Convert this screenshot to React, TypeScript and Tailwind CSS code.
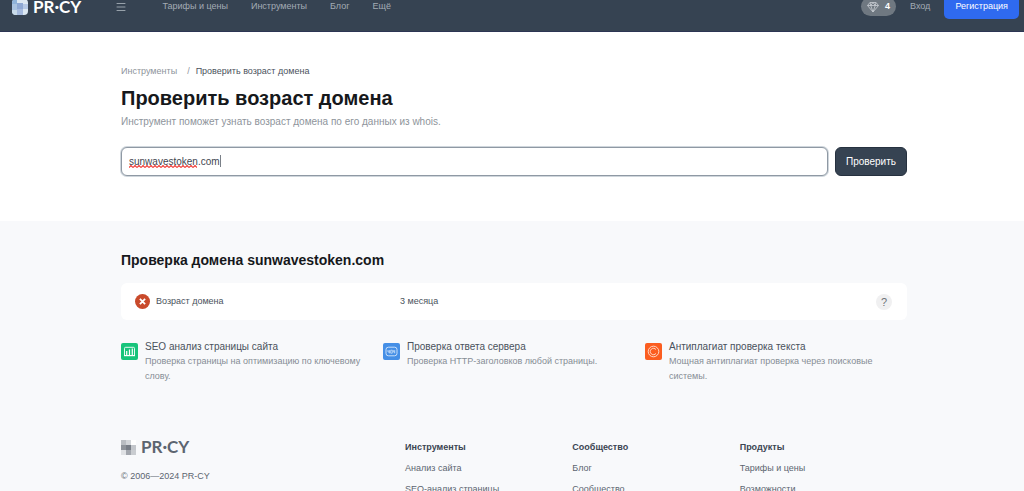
import type { ReactNode } from 'react';
import { Menu } from 'lucide-react';

const navLinks = ['Тарифы и цены', 'Инструменты', 'Блог', 'Ещё'];

const footerColumns = [
  { title: 'Инструменты', links: ['Анализ сайта', 'SEO-анализ страницы'] },
  { title: 'Сообщество', links: ['Блог', 'Сообщество'] },
  { title: 'Продукты', links: ['Тарифы и цены', 'Возможности'] },
];

function ChartIcon() {
  return (
    <svg viewBox="0 0 17 17" className="size-[17px]" fill="none" stroke="white">
      <path d="M3.5 13V5.4q0-1.1 1.1-1.1h7.8q1.1 0 1.1 1.1V13" strokeWidth="0.9" />
      <path d="M5.7 12.5V8M8.5 12.5V6.5M11.3 12.5V5.5" strokeWidth="1.2" />
      <path d="M3 12.6h11" strokeWidth="1.2" />
    </svg>
  );
}

function ServerIcon() {
  return (
    <svg viewBox="0 0 17 17" className="size-[17px]" fill="none" stroke="#d6e8fc" strokeWidth="0.9">
      <rect x="3" y="4.2" width="11" height="8.6" rx="2.4" />
      <path d="M5 7v2h1.8M6.4 7v3.4M7.7 7.2h1.6v3H7.7zM10.3 7v2h1.8M11.7 7v3.4" strokeWidth="0.7" />
    </svg>
  );
}

function CopyrightIcon() {
  return (
    <svg viewBox="0 0 17 17" className="size-[17px]" fill="none" stroke="#ffe3d6" strokeWidth="0.9">
      <circle cx="8.5" cy="8.5" r="5.3" />
      <path d="M11 6.6a3.2 3.2 0 1 0 0 3.8" />
    </svg>
  );
}

const features: { title: string; text: string; color: string; icon: ReactNode }[] = [
  {
    title: 'SEO анализ страницы сайта',
    text: 'Проверка страницы на оптимизацию по ключевому слову.',
    color: 'bg-[#17c47b]',
    icon: <ChartIcon />,
  },
  {
    title: 'Проверка ответа сервера',
    text: 'Проверка HTTP-заголовков любой страницы.',
    color: 'bg-[#458fe6]',
    icon: <ServerIcon />,
  },
  {
    title: 'Антиплагиат проверка текста',
    text: 'Мощная антиплагиат проверка через поисковые системы.',
    color: 'bg-[#fb5d20]',
    icon: <CopyrightIcon />,
  },
];

function HeaderMark() {
  return (
    <svg viewBox="0 0 16 16" className="size-4" shapeRendering="crispEdges">
      <clipPath id="mark">
        <rect width="16" height="16" rx="4" />
      </clipPath>
      <g clipPath="url(#mark)">
        <rect width="16" height="16" fill="#dce8f2" />
        <rect width="5" height="6" fill="#8fb3d9" />
        <rect y="5" width="5" height="6" fill="#a9c3e0" />
        <rect x="5" y="4" width="6" height="6" fill="#8fa9d4" />
        <rect x="5" y="10" width="6" height="6" fill="#a5bade" />
        <rect x="11" y="5" width="5" height="5" fill="#b5c9e6" />
        <rect y="11" width="5" height="5" fill="#c9dbea" />
      </g>
    </svg>
  );
}

function FooterMark() {
  return (
    <svg viewBox="0 0 15 15" className="size-[15px]" shapeRendering="crispEdges">
      <rect width="5" height="5" fill="#b9bdc2" />
      <rect x="5" width="5" height="5" fill="#d2d5d9" />
      <rect x="10" width="5" height="5" fill="#ffffff" />
      <rect y="5" width="5" height="5" fill="#8f949b" />
      <rect x="5" y="5" width="5" height="5" fill="#777d86" />
      <rect x="10" y="5" width="5" height="5" fill="#c3c6cb" />
      <rect y="10" width="5" height="5" fill="#dfe1e4" />
      <rect x="5" y="10" width="5" height="5" fill="#a2a6ad" />
      <rect x="10" y="10" width="5" height="5" fill="#c9ccd0" />
    </svg>
  );
}

function Header() {
  return (
    <header className="-mt-[18px] flex h-[50px] items-center border-b border-[#2c3553] bg-[#364352] pr-[5px] pl-3 text-[9px] text-[#a3abb4]">
      <a href="#" className="flex items-center gap-[5px] font-[Lato,sans-serif] text-[17px] leading-5 font-bold text-white">
        <HeaderMark />
        PR·CY
      </a>
      <button type="button" aria-label="Меню" className="ml-[34px]">
        <Menu className="size-3" strokeWidth={1.8} />
      </button>
      <nav className="ml-[35px] flex gap-[23px]">
        {navLinks.map((link) => (
          <a key={link} href="#">{link}</a>
        ))}
      </nav>
      <div className="ml-auto flex items-center">
        <span className="flex h-[19px] items-center gap-[6px] rounded-full bg-[#6f7881] px-[6px] font-bold text-white">
          <svg viewBox="0 0 24 24" className="size-3" fill="none" stroke="#c5cad0" strokeWidth="1.7" strokeLinejoin="round">
            <path d="M6 3h12l5 6-11 13L1 9zM1 9h22M12 22 7.5 9 12 3l4.5 6zM7.5 9 6 3M16.5 9 18 3" />
          </svg>
          4
        </span>
        <a href="#" className="ml-[14px]">Вход</a>
        <button type="button" className="ml-[14px] h-[25px] rounded-[5px] bg-[#2f6af0] px-[11px] text-white">
          Регистрация
        </button>
      </div>
    </header>
  );
}

function CheckForm() {
  return (
    <form className="mt-[18px] flex gap-[7px]" onSubmit={(e) => e.preventDefault()}>
      <div className="relative flex-1">
        <input
          type="text"
          aria-label="Домен"
          defaultValue="sunwavestoken.com"
          spellCheck={false}
          className="block h-[29px] w-full rounded-[6px] border border-[#8f99a4] bg-white px-[7px] text-[10px] text-[#3f4650] ring-1 ring-[#cfd6dc] outline-none"
        />
        {/* spelling mark and caret */}
        <svg className="absolute top-[18px] left-2 h-[3px] w-[68px]">
          <pattern id="wave" width="4" height="3" patternUnits="userSpaceOnUse">
            <path d="M0 2.5 2 .5 4 2.5" fill="none" stroke="#f0403a" strokeWidth="1.2" />
          </pattern>
          <rect width="68" height="3" fill="url(#wave)" />
        </svg>
        <span className="absolute top-2 left-[99px] h-3 w-px bg-[#7a8088]" />
      </div>
      <button type="submit" className="h-[29px] rounded-[6px] border border-[#26313f] bg-[#364352] px-[10px] text-[10px] text-white">
        Проверить
      </button>
    </form>
  );
}

export default function App() {
  return (
    <div className="h-screen overflow-hidden bg-[#f8f9fb] font-['Liberation_Sans',Arial,sans-serif] text-[10px] text-[#4a525c]">
      <Header />
      <main>
        <section className="bg-white pt-8 pr-[117px] pb-[45px] pl-[121px]">
          <nav aria-label="Навигация" className="flex text-[9px] leading-[14px]">
            <a href="#" className="text-[#8e949b]">Инструменты</a>
            <span className="mr-[6px] ml-[10px] text-[#8e949b]">/</span>
            <span>Проверить возраст домена</span>
          </nav>
          <h1 className="mt-2 text-[20px] leading-6 font-bold text-[#16181b]">Проверить возраст домена</h1>
          <p className="mt-1 leading-[15px] text-[#8e949b]">
            Инструмент поможет узнать возраст домена по его данных из whois.
          </p>
          <CheckForm />
        </section>

        <section className="pt-[29px] pr-[117px] pl-[121px]">
          <h2 className="text-[14px] leading-5 font-bold text-[#16181b]">Проверка домена sunwavestoken.com</h2>
          <div className="mt-[13px] flex h-[37px] items-center rounded-[6px] bg-white pr-[15px] pl-[14px]">
            <div className="flex w-[265px] items-center gap-[6px]">
              <svg viewBox="0 0 15 15" className="size-[15px]">
                <circle cx="7.5" cy="7.5" r="7.5" fill="#c94a2b" />
                <path d="m4.9 4.9 5.2 5.2m0-5.2-5.2 5.2" stroke="white" strokeWidth="1.8" />
              </svg>
              <span className="text-[9px]">Возраст домена</span>
            </div>
            <span className="text-[9px]">3 месяца</span>
            <button type="button" aria-label="Подсказка" className="ml-auto size-4 rounded-full bg-[#f0f0f1] text-[11px] leading-4 text-[#6d7278]">
              ?
            </button>
          </div>

          <div className="mt-5 grid grid-cols-3">
            {features.map((f) => (
              <a key={f.title} href="#" className="flex gap-[7px] pr-4">
                <span className={`mt-[3px] size-[17px] shrink-0 rounded-[2px] ${f.color}`}>{f.icon}</span>
                <span>
                  <span className="block leading-[14px]">{f.title}</span>
                  <span className="block text-[9px] leading-[15px] text-[#868d95]">{f.text}</span>
                </span>
              </a>
            ))}
          </div>
        </section>
      </main>

      <footer className="mt-[53px] flex pr-[117px] pl-[121px] text-[#5c6570]">
        <div className="w-[284px] shrink-0">
          <a href="#" className="flex items-center gap-[5px] font-[Lato,sans-serif] text-[17px] leading-5 font-bold">
            <FooterMark />
            PR·CY
          </a>
          <p className="mt-3 text-[9px] leading-[15px]">© 2006—2024 PR-CY</p>
        </div>
        <div className="grid flex-1 grid-cols-3 text-[9px] leading-[21px]">
          {footerColumns.map((column) => (
            <div key={column.title}>
              <h3 className="font-bold text-[#3b4552]">{column.title}</h3>
              <ul>
                {column.links.map((link) => (
                  <li key={link}><a href="#">{link}</a></li>
                ))}
              </ul>
            </div>
          ))}
        </div>
      </footer>
    </div>
  );
}
